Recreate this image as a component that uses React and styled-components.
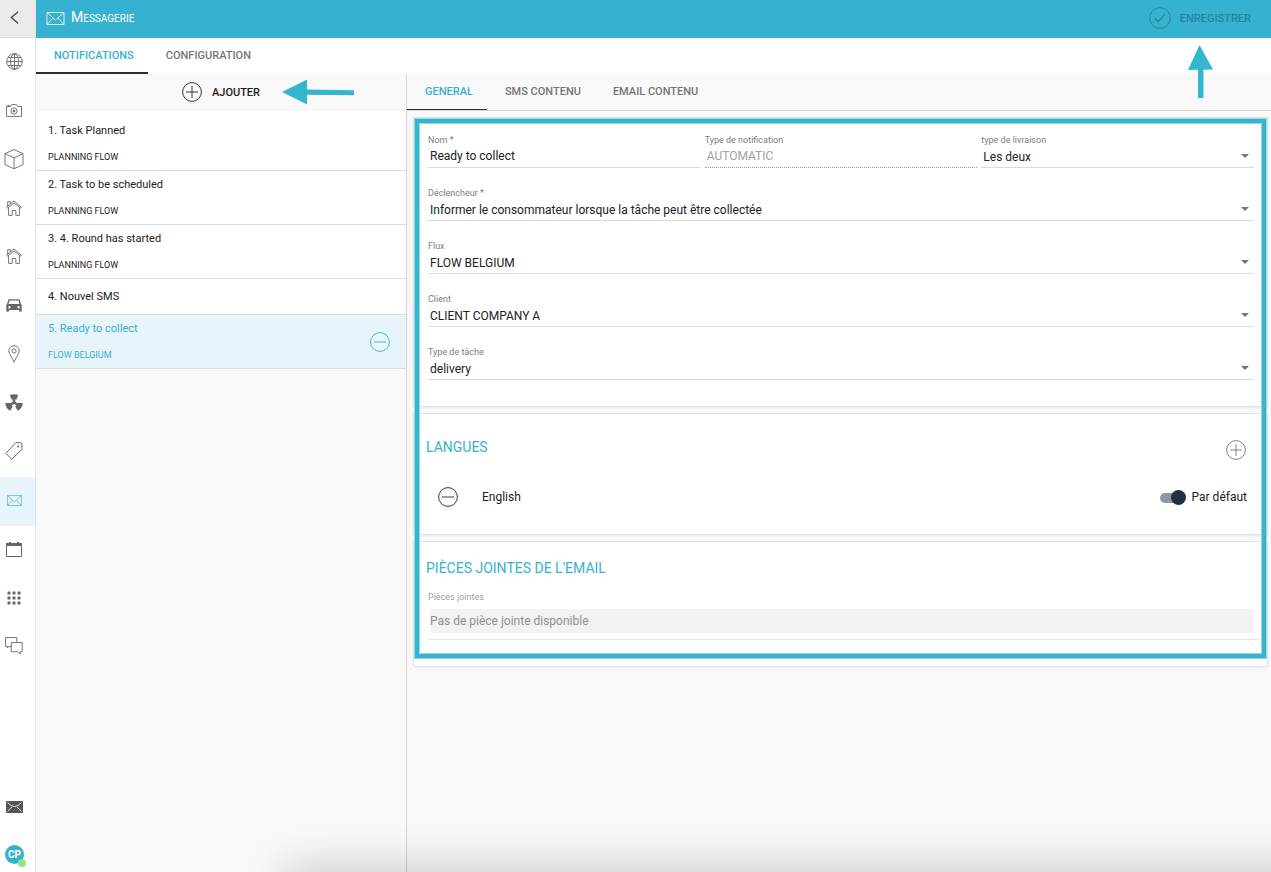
import { useState } from "react";
import styled, { createGlobalStyle } from "styled-components";

const accent = "#36b1cf";
const dark = "#223140";
const line = "#dcdcdc";

const GlobalStyle = createGlobalStyle`
  * {
    box-sizing: border-box;
  }
  body {
    margin: 0;
    background: #f9f9f9;
    color: #212121;
    font-family: Roboto, "Liberation Sans", sans-serif;
    font-size: 12px;
    overflow-x: hidden;
  }
  button, input, select {
    font: inherit;
    color: inherit;
    border: 0;
    padding: 0;
    margin: 0;
    background: none;
  }
  button {
    cursor: pointer;
  }
  svg {
    display: block;
  }
`;

const Page = styled.div`
  display: flex;
  min-height: 100vh;
  position: relative;
`;

const Sidebar = styled.aside`
  width: 36px;
  flex: none;
  display: flex;
  flex-direction: column;
  background: #fff;
  border-right: 1px solid #e4e4e4;
`;

const BackButton = styled.button`
  height: 38px;
  padding: 0 6px 2px 0;
  display: flex;
  align-items: center;
  justify-content: center;
  background: #ebebeb;
  border-bottom: 1px solid #dedede;
  color: #444;
`;

const SideNav = styled.nav`
  display: grid;
  grid-template-rows: repeat(3, 49px 49px 49px 48px) 48px;
`;

const SideLink = styled.a`
  display: flex;
  align-items: center;
  justify-content: center;
  padding: 0 7px 3px 0;
  color: ${(props) => (props.$active ? accent : "#666")};
  background: ${(props) => (props.$active ? "#e7f5fa" : "transparent")};
`;

const SideBottom = styled.div`
  margin-top: auto;
  padding: 0 6px 8px 0;
  display: flex;
  flex-direction: column;
  align-items: center;
  gap: 32px;
  color: #555;
`;

const Avatar = styled.button`
  position: relative;
  width: 19px;
  height: 19px;
  border-radius: 50%;
  background: ${accent};
  color: #fff;
  font-size: 10px;
  font-weight: 700;
  line-height: 19px;
`;

const Status = styled.span`
  position: absolute;
  right: -2px;
  bottom: -3px;
  width: 8px;
  height: 8px;
  border-radius: 50%;
  background: #90e58b;
`;

const Main = styled.main`
  flex: 1;
  min-width: 0;
  display: flex;
  flex-direction: column;
`;

const Header = styled.header`
  height: 38px;
  padding: 0 20px 2px 10px;
  display: flex;
  align-items: center;
  justify-content: space-between;
  background: ${accent};
  color: #fff;
`;

const TitleRow = styled.div`
  display: flex;
  align-items: center;
  gap: 6px;
`;

const Title = styled.h1`
  margin: 0;
  font-size: 10px;
  font-weight: 400;
  line-height: 18px;
  text-transform: uppercase;
  &::first-letter {
    font-size: 14px;
  }
`;

const SaveButton = styled.button`
  display: flex;
  align-items: center;
  gap: 9px;
  color: #26859c;
  font-size: 11px;
  font-weight: 500;
`;

const Tabs = styled.div`
  display: flex;
  height: ${(props) => (props.$sub ? "37px" : "36px")};
  background: ${(props) => (props.$sub ? "transparent" : "#fff")};
  border-bottom: ${(props) => (props.$sub ? "1px solid #d8d8d8" : "0")};
`;

const Tab = styled.button`
  padding: 0 14px 2px 18px;
  font-size: 11px;
  font-weight: 500;
  color: ${(props) => (props.$active ? accent : "#757575")};
  box-shadow: ${(props) => (props.$active ? `inset 0 -${props.$bar}px ${dark}` : "none")};
`;

const Body = styled.div`
  flex: 1;
  display: grid;
  grid-template-columns: 371px minmax(0, 1fr);
`;

const ListPane = styled.section`
  border-right: 1px solid #d4d4d4;
`;

const AddBar = styled.div`
  position: relative;
  height: 37px;
  padding-bottom: 1px;
  display: flex;
  justify-content: center;
`;

const AddButton = styled.button`
  display: flex;
  align-items: center;
  gap: 10px;
  font-size: 11px;
  font-weight: 500;
`;

const LeftArrow = styled.svg`
  position: absolute;
  left: 246px;
  top: 5px;
`;

const UpArrow = styled.svg`
  position: absolute;
  right: 57px;
  top: 44px;
`;

const List = styled.ul`
  margin: 0;
  padding: 6px 0 0;
  list-style: none;
  background: #fff;
`;

const ListItem = styled.li`
  display: flex;
  align-items: center;
  justify-content: space-between;
  min-height: 36px;
  padding: 0 16px 0 12px;
  border-bottom: 1px solid ${line};
  color: ${(props) => (props.$active ? accent : "inherit")};
  background: ${(props) => (props.$active ? "#e7f5fa" : "transparent")};
`;

const ItemName = styled.div`
  font-size: 11px;
  line-height: 28px;
`;

const ItemFlow = styled.div`
  font-size: 9px;
  line-height: 25px;
`;

const IconButton = styled.button`
  color: ${(props) => props.$color || "inherit"};
`;

const Cards = styled.div`
  position: relative;
  margin: 6px 3px 0 6px;
  display: flex;
  flex-direction: column;
  gap: 6px;
`;

const Card = styled.section`
  background: #fff;
  border: 1px solid #e2e2e2;
  box-shadow: 0 1px 3px rgba(0, 0, 0, 0.06);
`;

const FormCard = styled(Card)`
  padding: 16px 13px 26px 14px;
  display: grid;
  gap: 19px;
`;

const LanguageCard = styled(Card)`
  padding: 26px 20px 27px 12px;
`;

const AttachmentCard = styled(Card)`
  padding: 19px 7px 26px 12px;
`;

const Highlight = styled.div`
  position: absolute;
  inset: 2px 2px 9px;
  border: 4px solid #35b6d0;
  box-shadow: 0 0 0 1px #98d8e6, inset 0 0 0 1px #98d8e6;
  pointer-events: none;
`;

const Columns = styled.div`
  display: grid;
  grid-template-columns: repeat(3, minmax(0, 1fr));
  gap: 4px;
`;

const FieldBox = styled.div`
  position: relative;
  border-bottom: 1px ${(props) => (props.$dotted ? "dotted #999" : `solid ${line}`)};
`;

const FieldLabel = styled.label`
  display: block;
  font-size: 9px;
  line-height: 12px;
  color: #7d7d7d;
`;

const TextInput = styled.input`
  display: block;
  width: 100%;
  height: 21px;
  padding: 0 2px 2px;
  &:disabled {
    color: #a0a0a0;
  }
`;

const Select = styled.select`
  display: block;
  width: 100%;
  height: 21px;
  padding: 0 20px 0 2px;
  appearance: none;
`;

const Caret = styled.svg`
  position: absolute;
  right: 5px;
  bottom: 9px;
  fill: #757575;
  pointer-events: none;
`;

const CardTitle = styled.h2`
  margin: 0;
  font-size: 14px;
  font-weight: 400;
  line-height: 15px;
  color: ${accent};
`;

const LanguageHead = styled.div`
  display: flex;
  justify-content: space-between;
  align-items: flex-start;
  padding-right: 1px;
`;

const LanguageRow = styled.div`
  display: flex;
  align-items: center;
  gap: 24px;
  margin-top: 27px;
  padding-left: 12px;
`;

const ToggleLabel = styled.label`
  margin-left: auto;
  display: flex;
  align-items: center;
  gap: 6px;
`;

const Toggle = styled.input`
  appearance: none;
  position: relative;
  width: 26px;
  height: 15px;
  &::before {
    content: "";
    position: absolute;
    inset: 3px 2px 2px 0;
    border-radius: 5px;
    background: #8f979e;
  }
  &::after {
    content: "";
    position: absolute;
    top: 0;
    left: ${(props) => (props.checked ? "11px" : "0")};
    width: 15px;
    height: 15px;
    border-radius: 50%;
    background: ${dark};
  }
`;

const Attachment = styled.div`
  margin: 15px 0 0 2px;
`;

const AttachmentLabel = styled(FieldLabel)`
  color: #9e9e9e;
`;

const AttachmentField = styled.div`
  padding: 6px 6px 6px 2px;
  border-bottom: 1px solid #e4e4e4;
`;

const AttachmentInput = styled.input`
  display: block;
  width: 100%;
  height: 24px;
  background: #f2f2f2;
  color: #8f8f8f;
  border-radius: 2px;
`;

// soft shade rising from the lower edge of the window
const BottomShade = styled.div`
  position: fixed;
  left: 284px;
  right: -60px;
  bottom: -20px;
  height: 20px;
  box-shadow: 0 0 44px rgba(0, 0, 0, 0.32);
  pointer-events: none;
`;

const Icon = ({ w = 17, h = 17, children, ...rest }) => (
  <svg width={w} height={h} viewBox={`0 0 ${w} ${h}`} fill="none" stroke="currentColor" aria-hidden="true" {...rest}>
    {children}
  </svg>
);

const BackIcon = () => (
  <Icon w={9} h={13} strokeWidth="1.3">
    <path d="M8 .7 1.3 6.5 8 12.3" />
  </Icon>
);

const GlobeIcon = () => (
  <Icon strokeWidth=".9">
    <circle cx="8.5" cy="8.5" r="7.8" />
    <ellipse cx="8.5" cy="8.5" rx="3.9" ry="7.8" />
    <path d="M8.5.7v15.6M.7 8.5h15.6M2 4.5h13M2 12.5h13" />
  </Icon>
);

const CameraIcon = () => (
  <Icon w={16} h={13} strokeWidth=".9">
    <path d="M.5 2.5h3.8L5.5.6h5l1.2 1.9h3.8v9.9H.5zM1.8 2.3V1.4h1.5v.9" />
    <circle cx="8" cy="7" r="3.1" />
    <circle cx="8" cy="7" r="1" fill="currentColor" />
  </Icon>
);

const BoxIcon = () => (
  <Icon w={20} h={21} strokeWidth=".9">
    <path d="m10 .6 9 4v11l-9 4.200-9-4.200v-11zM1 4.600l9 4.200 9-4.200M10 8.800v11" />
  </Icon>
);

const HomeIcon = () => (
  <Icon w={16} h={16} strokeWidth=".9">
    <path d="M.7 7.2 8 .9l7.3 6.3-.9 1L8 2.8 1.6 8.2zM1.700 6V1.700h2.600v2.200M2.600 7.600v7.800h3.500v-4.900h3.800v4.900h3.500V7.600" />
  </Icon>
);

const CarIcon = () => (
  <Icon w={16} h={13} fill="currentColor" stroke="none">
    <path
      fillRule="evenodd"
      d="M3.2.3h9.6c.5 0 .9.3 1 .7L15 5l.7.9v6.2c0 .4-.3.7-.7.7h-1.2c-.4 0-.7-.3-.7-.7V11H2.9v1.1c0 .4-.3.7-.7.7H1c-.4 0-.7-.3-.7-.7V5.9L1 5l1.2-4c.1-.4.5-.7 1-.7zm.3 1.3L2.5 5h11l-1-3.400zM3.400 7a1.200 1.200 0 1 0 0 2.400 1.200 1.200 0 0 0 0-2.400zm9.200 0a1.200 1.200 0 1 0 0 2.400 1.200 1.200 0 0 0 0-2.400z"
    />
  </Icon>
);

const PinIcon = () => (
  <Icon w={12} h={18} strokeWidth=".9">
    <path d="M6 .7A5.200 5.200 0 0 0 .8 5.900C.8 9.400 4.200 12 6 17.200 7.800 12 11.200 9.400 11.200 5.900A5.200 5.200 0 0 0 6 .7z" />
    <circle cx="6" cy="6" r="2.1" />
  </Icon>
);

const RadiationIcon = () => (
  <Icon w={18} h={17} fill="currentColor" stroke="none">
    <path d="M4.800 1Q9-.6 13.200 1L11.400 5.400Q9 4.600 6.600 5.400zM.3 9h5.100q.2 2 2.400 3.500L5.200 16.800Q.8 14.500.3 9zM17.700 9h-5.100q-.2 2-2.400 3.500l2.600 4.300Q17.200 14.500 17.700 9z" />
    <path d="M7.700 5h2.600v3l2.700 1.600-1.200 2L9 9.900l-2.800 1.700-1.200-2L7.700 8z" />
  </Icon>
);

const TagIcon = () => (
  <Icon w={18} h={18} strokeWidth="1">
    <path d="M10.500.9 16.300.7l.6.6v6.200L6.700 17.200.9 11.400z" />
    <circle cx="13.200" cy="4.500" r="1" fill="currentColor" stroke="none" />
  </Icon>
);

const MailIcon = ({ w = 15, h = 11 }) => (
  <svg width={w} height={h} viewBox="0 0 18 13" fill="none" stroke="currentColor" aria-hidden="true">
    <path d="M.5.5h17v12H.5zM.8.800 9 8 17.200.8M.8 12.200 6.600 6M17.200 12.200 11.400 6" strokeWidth=".8" />
  </svg>
);

const DarkMailIcon = () => (
  <Icon w={17} h={12}>
    <path d="M.5.5h16v11H.5z" fill="currentColor" />
    <path d="M1.500 1.500Q8.500 9.500 15.500 1.500M1.500 10.500 6 5.800M15.500 10.500 11 5.800" stroke="#fff" strokeWidth=".8" />
  </Icon>
);

const CalendarIcon = () => (
  <Icon w={16} h={16}>
    <path d="M.5 2.500h15v13H.5z" />
    <path d="M0 2h16v3H0z" fill="currentColor" stroke="none" />
    <path d="M3 1.500h2M11 1.500h2" />
  </Icon>
);

const DotsIcon = () => (
  <Icon w={14} h={14} fill="currentColor" stroke="none">
    {[0, 5, 10].map((y) => [0, 5, 10].map((x) => <rect key={`${x}-${y}`} x={x + 0.5} y={y + 0.5} width="3" height="3" rx=".6" />))}
  </Icon>
);

const ChatIcon = () => (
  <Icon w={18} h={18} strokeWidth=".9">
    <path d="M6.500 9.500H3.500L2.500 11V9.500H.6V.6h11.200v5" />
    <path d="M6.200 5.600h11v9.200h-2v2.200l-2.400-2.200H6.200z" />
  </Icon>
);

const CircleIcon = ({ size = 20, children }) => (
  <svg width={size} height={size} viewBox="0 0 20 20" fill="none" stroke="currentColor" strokeWidth=".9" aria-hidden="true">
    <circle cx="10" cy="10" r="9.400" />
    {children}
  </svg>
);

const PlusCircle = () => (
  <CircleIcon>
    <path d="M10 4v12M4 10h12" />
  </CircleIcon>
);

const MinusCircle = () => (
  <CircleIcon>
    <path d="M4 10h12" />
  </CircleIcon>
);

const CheckCircle = () => (
  <CircleIcon size={22}>
    <path d="m5.500 10.500 2.900 2.800 6-6.600" strokeWidth="1.200" />
  </CircleIcon>
);

const sideItems = [
  { label: "Monde", icon: <GlobeIcon /> },
  { label: "Photos", icon: <CameraIcon /> },
  { label: "Colis", icon: <BoxIcon /> },
  { label: "Dépôts", icon: <HomeIcon /> },
  { label: "Hubs", icon: <HomeIcon /> },
  { label: "Véhicules", icon: <CarIcon /> },
  { label: "Adresses", icon: <PinIcon /> },
  { label: "Zones", icon: <RadiationIcon /> },
  { label: "Tags", icon: <TagIcon /> },
  { label: "Messagerie", icon: <MailIcon />, active: true },
  { label: "Calendrier", icon: <CalendarIcon /> },
  { label: "Applications", icon: <DotsIcon /> },
  { label: "Discussions", icon: <ChatIcon /> },
];

const notifications = [
  { name: "1. Task Planned", flow: "PLANNING FLOW" },
  { name: "2. Task to be scheduled", flow: "PLANNING FLOW" },
  { name: "3. 4. Round has started", flow: "PLANNING FLOW" },
  { name: "4. Nouvel SMS" },
  { name: "5. Ready to collect", flow: "FLOW BELGIUM", active: true },
];

const SelectField = ({ id, label, value }) => (
  <FieldBox>
    <FieldLabel htmlFor={id}>{label}</FieldLabel>
    <Select id={id} defaultValue={value}>
      <option>{value}</option>
    </Select>
    <Caret width="8" height="4" viewBox="0 0 8 4">
      <path d="M0 0h8L4 4z" />
    </Caret>
  </FieldBox>
);

const App = () => {
  const [byDefault, setByDefault] = useState(true);

  return (
    <>
      <GlobalStyle />
      <Page>
        <Sidebar>
          <BackButton aria-label="Retour">
            <BackIcon />
          </BackButton>
          <SideNav>
            {sideItems.map((item) => (
              <SideLink key={item.label} href="#" aria-label={item.label} $active={item.active}>
                {item.icon}
              </SideLink>
            ))}
          </SideNav>
          <SideBottom>
            <DarkMailIcon />
            <Avatar>
              CP
              <Status />
            </Avatar>
          </SideBottom>
        </Sidebar>
        <Main>
          <Header>
            <TitleRow>
              <MailIcon w={19} h={13} />
              <Title>Messagerie</Title>
            </TitleRow>
            <SaveButton>
              <CheckCircle />
              ENREGISTRER
            </SaveButton>
          </Header>
          <Tabs>
            <Tab $active $bar={2}>NOTIFICATIONS</Tab>
            <Tab>CONFIGURATION</Tab>
          </Tabs>
          <Body>
            <ListPane>
              <AddBar>
                <AddButton>
                  <PlusCircle />
                  AJOUTER
                </AddButton>
                <LeftArrow width="73" height="26" viewBox="0 0 73 26" fill="#35b6d0">
                  <path d="M0 13 25 .5v10l47 .7v5l-47-.5v9.800z" />
                </LeftArrow>
              </AddBar>
              <List>
                {notifications.map((item) => (
                  <ListItem key={item.name} $active={item.active}>
                    <div>
                      <ItemName>{item.name}</ItemName>
                      {item.flow && <ItemFlow>{item.flow}</ItemFlow>}
                    </div>
                    {item.active && (
                      <IconButton aria-label="Supprimer">
                        <MinusCircle />
                      </IconButton>
                    )}
                  </ListItem>
                ))}
              </List>
            </ListPane>
            <section>
              <Tabs $sub>
                <Tab $active $bar={1}>GENERAL</Tab>
                <Tab>SMS CONTENU</Tab>
                <Tab>EMAIL CONTENU</Tab>
              </Tabs>
              <Cards>
                <FormCard>
                  <Columns>
                    <FieldBox>
                      <FieldLabel htmlFor="nom">Nom *</FieldLabel>
                      <TextInput id="nom" defaultValue="Ready to collect" />
                    </FieldBox>
                    <FieldBox $dotted>
                      <FieldLabel htmlFor="type">Type de notification</FieldLabel>
                      <TextInput id="type" defaultValue="AUTOMATIC" disabled />
                    </FieldBox>
                    <SelectField id="livraison" label="type de livraison" value="Les deux" />
                  </Columns>
                  <SelectField
                    id="declencheur"
                    label="Déclencheur *"
                    value="Informer le consommateur lorsque la tâche peut être collectée"
                  />
                  <SelectField id="flux" label="Flux" value="FLOW BELGIUM" />
                  <SelectField id="client" label="Client" value="CLIENT COMPANY A" />
                  <SelectField id="tache" label="Type de tâche" value="delivery" />
                </FormCard>
                <LanguageCard>
                  <LanguageHead>
                    <CardTitle>LANGUES</CardTitle>
                    <IconButton aria-label="Ajouter une langue" $color="#757575">
                      <PlusCircle />
                    </IconButton>
                  </LanguageHead>
                  <LanguageRow>
                    <IconButton aria-label="Retirer la langue">
                      <MinusCircle />
                    </IconButton>
                    <span>English</span>
                    <ToggleLabel>
                      <Toggle type="checkbox" checked={byDefault} onChange={(e) => setByDefault(e.target.checked)} />
                      Par défaut
                    </ToggleLabel>
                  </LanguageRow>
                </LanguageCard>
                <AttachmentCard>
                  <CardTitle>PIÈCES JOINTES DE L'EMAIL</CardTitle>
                  <Attachment>
                    <AttachmentLabel htmlFor="pieces">Pièces jointes</AttachmentLabel>
                    <AttachmentField>
                      <AttachmentInput id="pieces" defaultValue="Pas de pièce jointe disponible" disabled />
                    </AttachmentField>
                  </Attachment>
                </AttachmentCard>
                <Highlight />
              </Cards>
            </section>
          </Body>
        </Main>
        <UpArrow width="27" height="56" viewBox="0 0 27 56" fill="#35b6d0">
          <path d="M12.500 1 26 25.500l-9.500.2V54h-5.500V25.800L1 26z" />
        </UpArrow>
      </Page>
      <BottomShade />
    </>
  );
};

export default App;
